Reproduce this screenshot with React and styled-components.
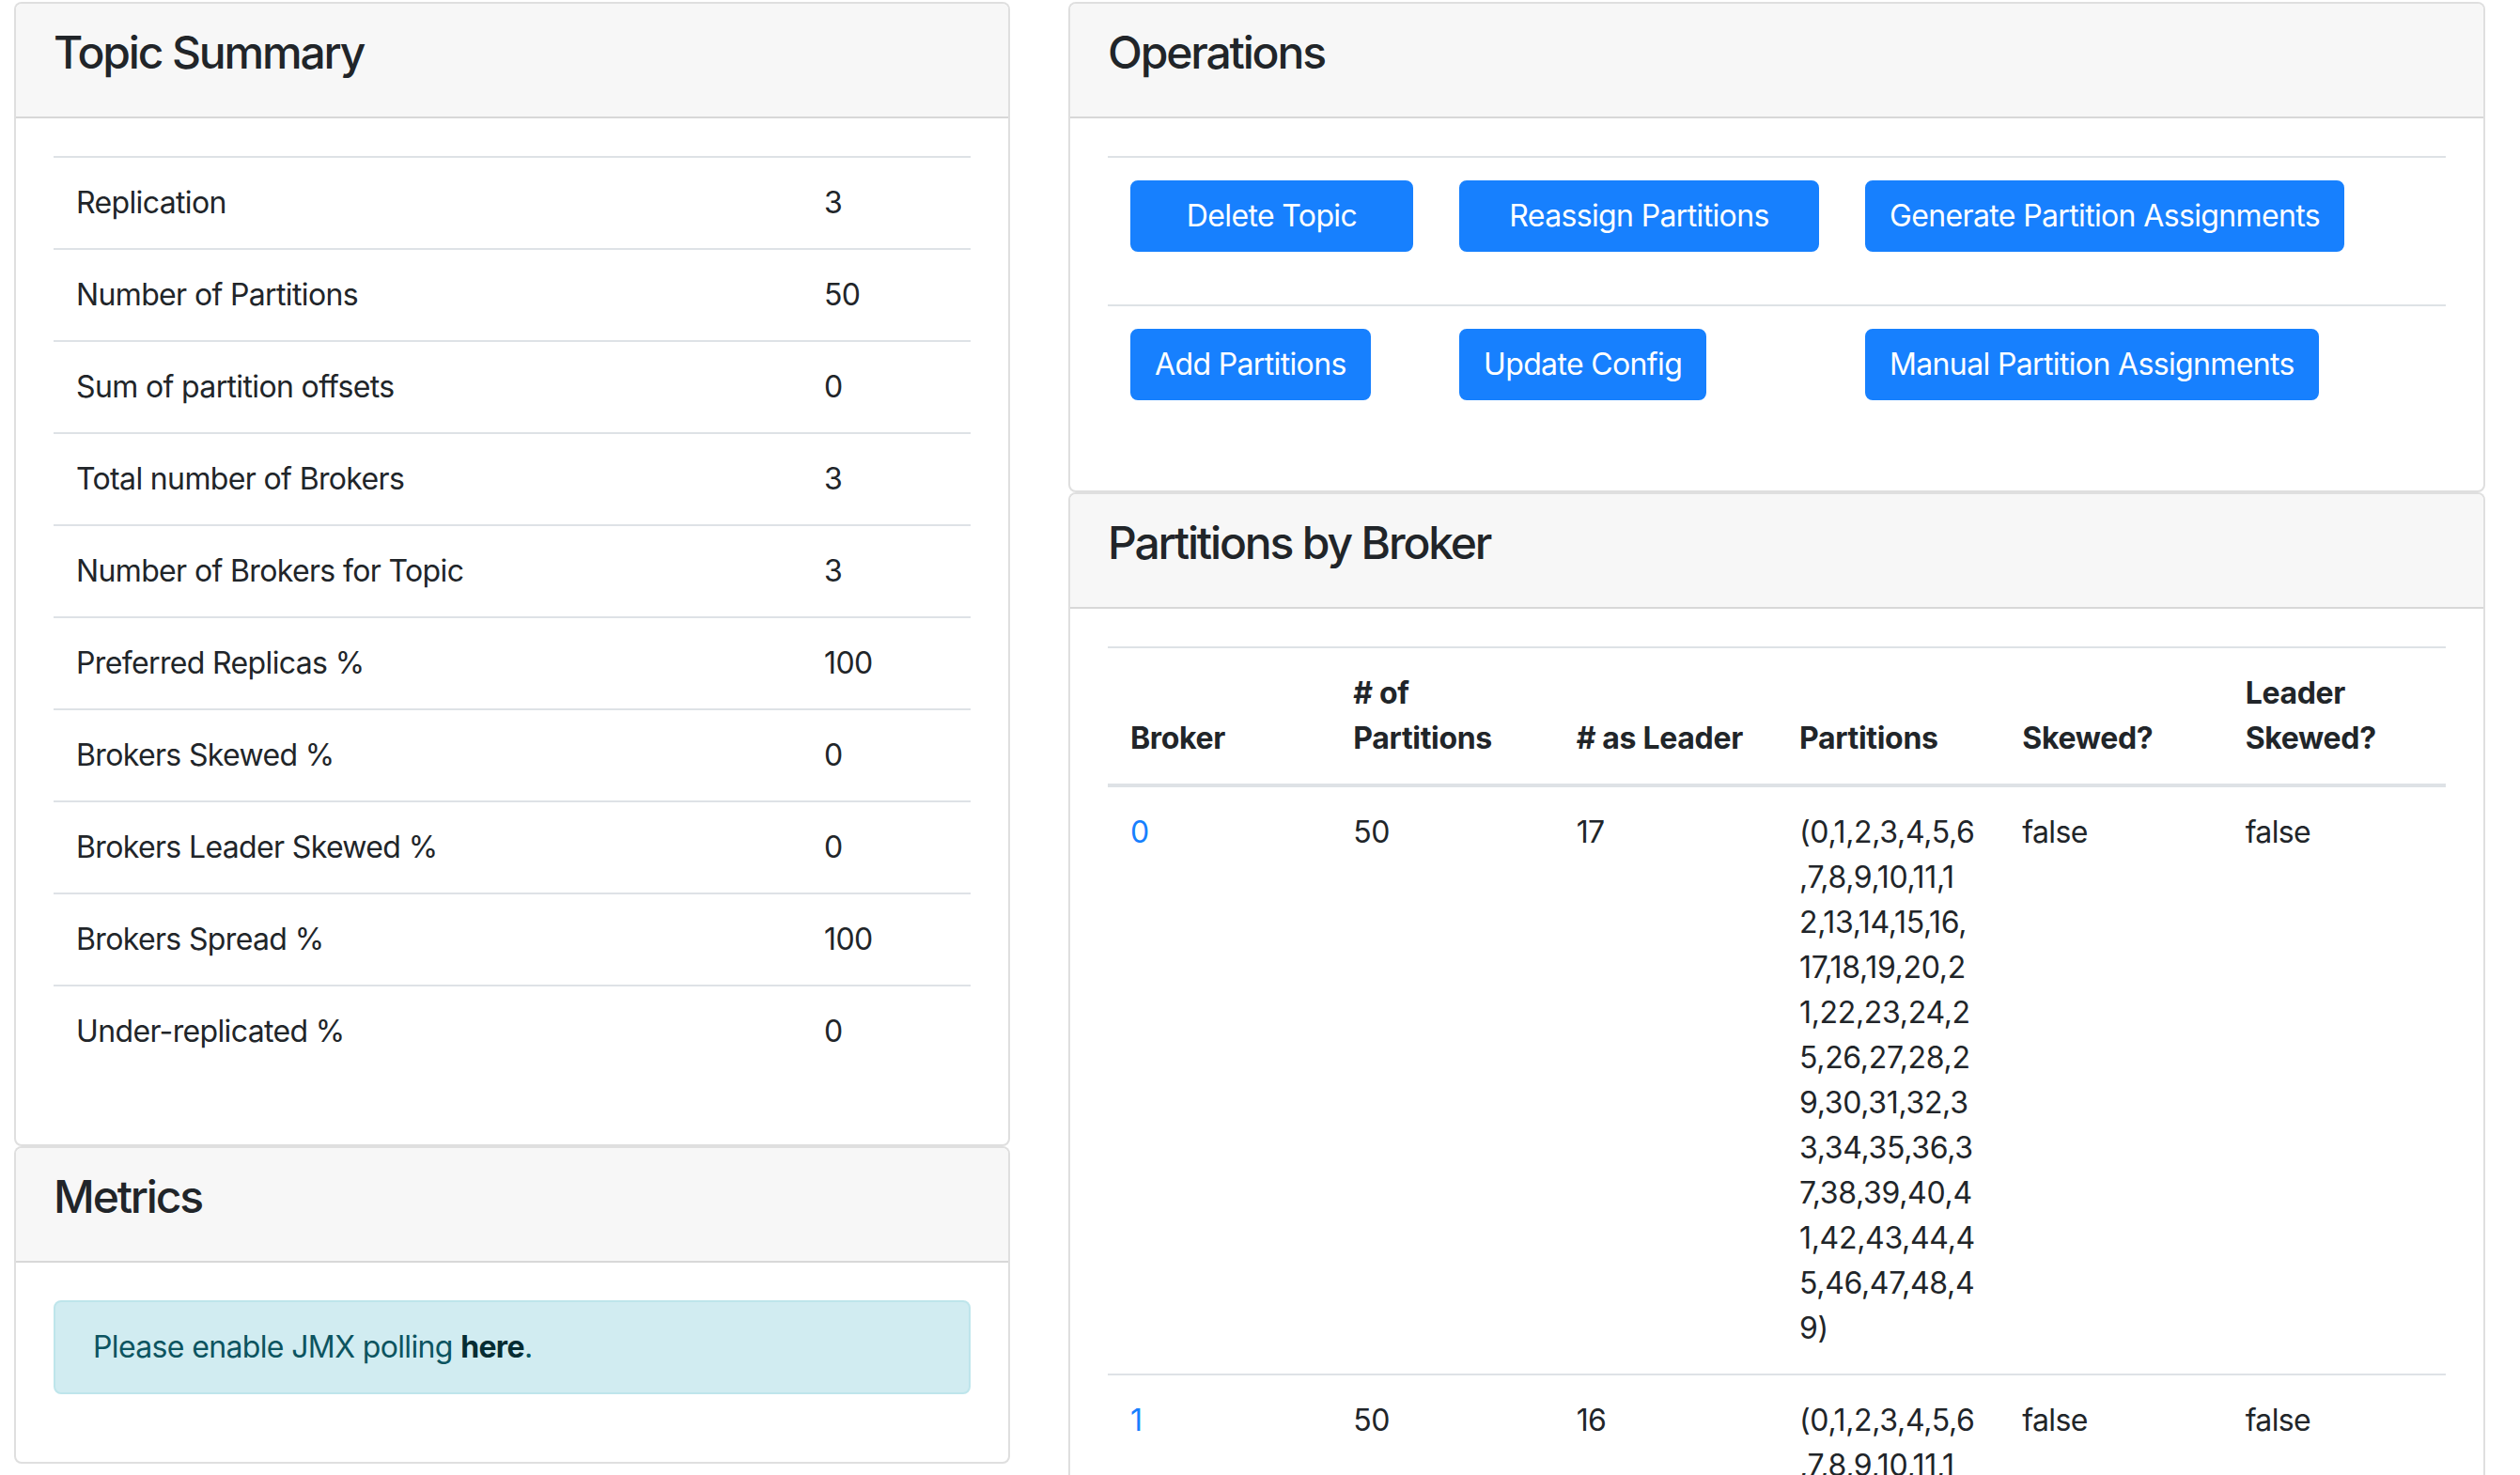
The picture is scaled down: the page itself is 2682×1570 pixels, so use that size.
import styled, { createGlobalStyle } from 'styled-components';

const GlobalStyle = createGlobalStyle`
  * { box-sizing: border-box; }
  body {
    margin: 0;
    background: #fff;
    color: #212529;
    font-family: Inter, "Noto Sans", "DejaVu Sans", sans-serif;
    font-size: 32px;
    line-height: 1.5;
    letter-spacing: -0.02em;
  }
`;

const summary = [
  ['Replication', '3'],
  ['Number of Partitions', '50'],
  ['Sum of partition offsets', '0'],
  ['Total number of Brokers', '3'],
  ['Number of Brokers for Topic', '3'],
  ['Preferred Replicas %', '100'],
  ['Brokers Skewed %', '0'],
  ['Brokers Leader Skewed %', '0'],
  ['Brokers Spread %', '100'],
  ['Under-replicated %', '0'],
];

// width is only set where the button is wider than its label
const operations = [
  [
    { label: 'Delete Topic', width: '301px' },
    { label: 'Reassign Partitions', width: '383px' },
    { label: 'Generate Partition Assignments' },
  ],
  [
    { label: 'Add Partitions' },
    { label: 'Update Config' },
    { label: 'Manual Partition Assignments' },
  ],
];

const opsColumns = ['350px', '432px', 'auto'];

const brokers = [
  { id: 0, count: 50, leader: 17 },
  { id: 1, count: 50, leader: 16 },
  { id: 2, count: 50, leader: 17 },
];

// where the partition list wraps in its narrow column
const lineLengths = [14, 14, 14, 13, 12, 12, 12, 12, 12, 12, 12, 2];

const partitionLines = () => {
  const text = '(' + Array.from({ length: 50 }, (_, i) => i).join(',') + ')';
  const lines = [];
  let pos = 0;
  lineLengths.forEach((n) => {
    lines.push(text.slice(pos, pos + n));
    pos += n;
  });
  return lines;
};

const App = () => {
  const lines = partitionLines();

  return (
    <>
      <GlobalStyle />
      <Page>
        <Column>
          <Card>
            <CardHeader>
              <CardTitle>Topic Summary</CardTitle>
            </CardHeader>
            <CardBody>
              <Table>
                <tbody>
                  {summary.map(([label, value]) => (
                    <tr key={label}>
                      <Cell $width="796px">{label}</Cell>
                      <Cell>{value}</Cell>
                    </tr>
                  ))}
                </tbody>
              </Table>
            </CardBody>
          </Card>

          <Card>
            <CardHeader>
              <CardTitle>Metrics</CardTitle>
            </CardHeader>
            <CardBody>
              <Alert>
                Please enable JMX polling <AlertLink href="#">here</AlertLink>.
              </Alert>
            </CardBody>
          </Card>
        </Column>

        <Column>
          <Card>
            <CardHeader>
              <CardTitle>Operations</CardTitle>
            </CardHeader>
            <CardBody>
              <Table $flush>
                <tbody>
                  {operations.map((row, r) => (
                    <tr key={`ops${r}`}>
                      {row.map((op, i) => (
                        <Cell key={op.label} $width={opsColumns[i]}>
                          <ActionButton type="button" $width={op.width}>
                            {op.label}
                          </ActionButton>
                        </Cell>
                      ))}
                    </tr>
                  ))}
                </tbody>
              </Table>
            </CardBody>
          </Card>

          <Card>
            <CardHeader>
              <CardTitle>Partitions by Broker</CardTitle>
            </CardHeader>
            <CardBody>
              <Table $fixed>
                <thead>
                  <tr>
                    <HeadCell>Broker</HeadCell>
                    <HeadCell># of Partitions</HeadCell>
                    <HeadCell># as Leader</HeadCell>
                    <HeadCell>Partitions</HeadCell>
                    <HeadCell>Skewed?</HeadCell>
                    <HeadCell>Leader Skewed?</HeadCell>
                  </tr>
                </thead>
                <tbody>
                  {brokers.map((b) => (
                    <tr key={b.id}>
                      <Cell>
                        <BrokerLink href="#">{b.id}</BrokerLink>
                      </Cell>
                      <Cell>{b.count}</Cell>
                      <Cell>{b.leader}</Cell>
                      <Cell>
                        {lines.map((l, i) => (
                          <PartLine key={`p${b.id}-${i}`}>{l}</PartLine>
                        ))}
                      </Cell>
                      <Cell>false</Cell>
                      <Cell>false</Cell>
                    </tr>
                  ))}
                </tbody>
              </Table>
            </CardBody>
          </Card>
        </Column>
      </Page>
    </>
  );
};

export default App;

const Page = styled.div`
  display: grid;
  grid-template-columns: 1060px 1508px;
  column-gap: 62px;
  align-items: start;
  padding: 2px 15px 0;
`;

const Column = styled.div`
  display: flex;
  flex-direction: column;
`;

const Card = styled.section`
  background: #fff;
  border: 2px solid rgba(0, 0, 0, 0.125);
  border-radius: 8px;
  overflow: hidden;
`;

const CardHeader = styled.div`
  padding: 24px 40px;
  background: #f7f7f7;
  border-bottom: 2px solid rgba(0, 0, 0, 0.125);
`;

const CardTitle = styled.h4`
  margin: 0 0 16px;
  font-size: 48px;
  font-weight: 500;
  line-height: 56px;
  letter-spacing: -0.045em;
`;

const CardBody = styled.div`
  padding: 40px;
`;

const Table = styled.table`
  width: 100%;
  border-collapse: collapse;
  table-layout: ${(p) => (p.$fixed ? 'fixed' : 'auto')};
  margin-bottom: ${(p) => (p.$flush ? '0' : '32px')};
`;

const Cell = styled.td`
  width: ${(p) => p.$width || 'auto'};
  padding: 24px;
  border-top: 2px solid #dee2e6;
  vertical-align: top;
  text-align: left;
`;

const HeadCell = styled.th`
  padding: 24px;
  border-top: 2px solid #dee2e6;
  border-bottom: 4px solid #dee2e6;
  vertical-align: bottom;
  text-align: left;
  font-weight: 700;
  letter-spacing: -0.01em;
`;

const PartLine = styled.span`
  display: block;
  white-space: nowrap;
  letter-spacing: -0.01em;
`;

const BrokerLink = styled.a`
  color: #1780fe;
  text-decoration: none;
`;

const ActionButton = styled.button`
  display: inline-block;
  width: ${(p) => p.$width || 'auto'};
  margin-bottom: 32px;
  padding: 12px 24px;
  font-family: inherit;
  font-size: 32px;
  line-height: 48px;
  font-weight: 400;
  letter-spacing: -0.02em;
  text-align: center;
  color: #fff;
  background: #1780fe;
  border: 2px solid #1780fe;
  border-radius: 8px;
  cursor: pointer;
  vertical-align: top;
`;

const Alert = styled.div`
  margin-bottom: 32px;
  padding: 24px 40px;
  color: #0c5460;
  background: #d1ecf1;
  border: 2px solid #bee5eb;
  border-radius: 8px;
`;

const AlertLink = styled.a`
  color: #062c33;
  font-weight: 700;
  text-decoration: none;
`;
